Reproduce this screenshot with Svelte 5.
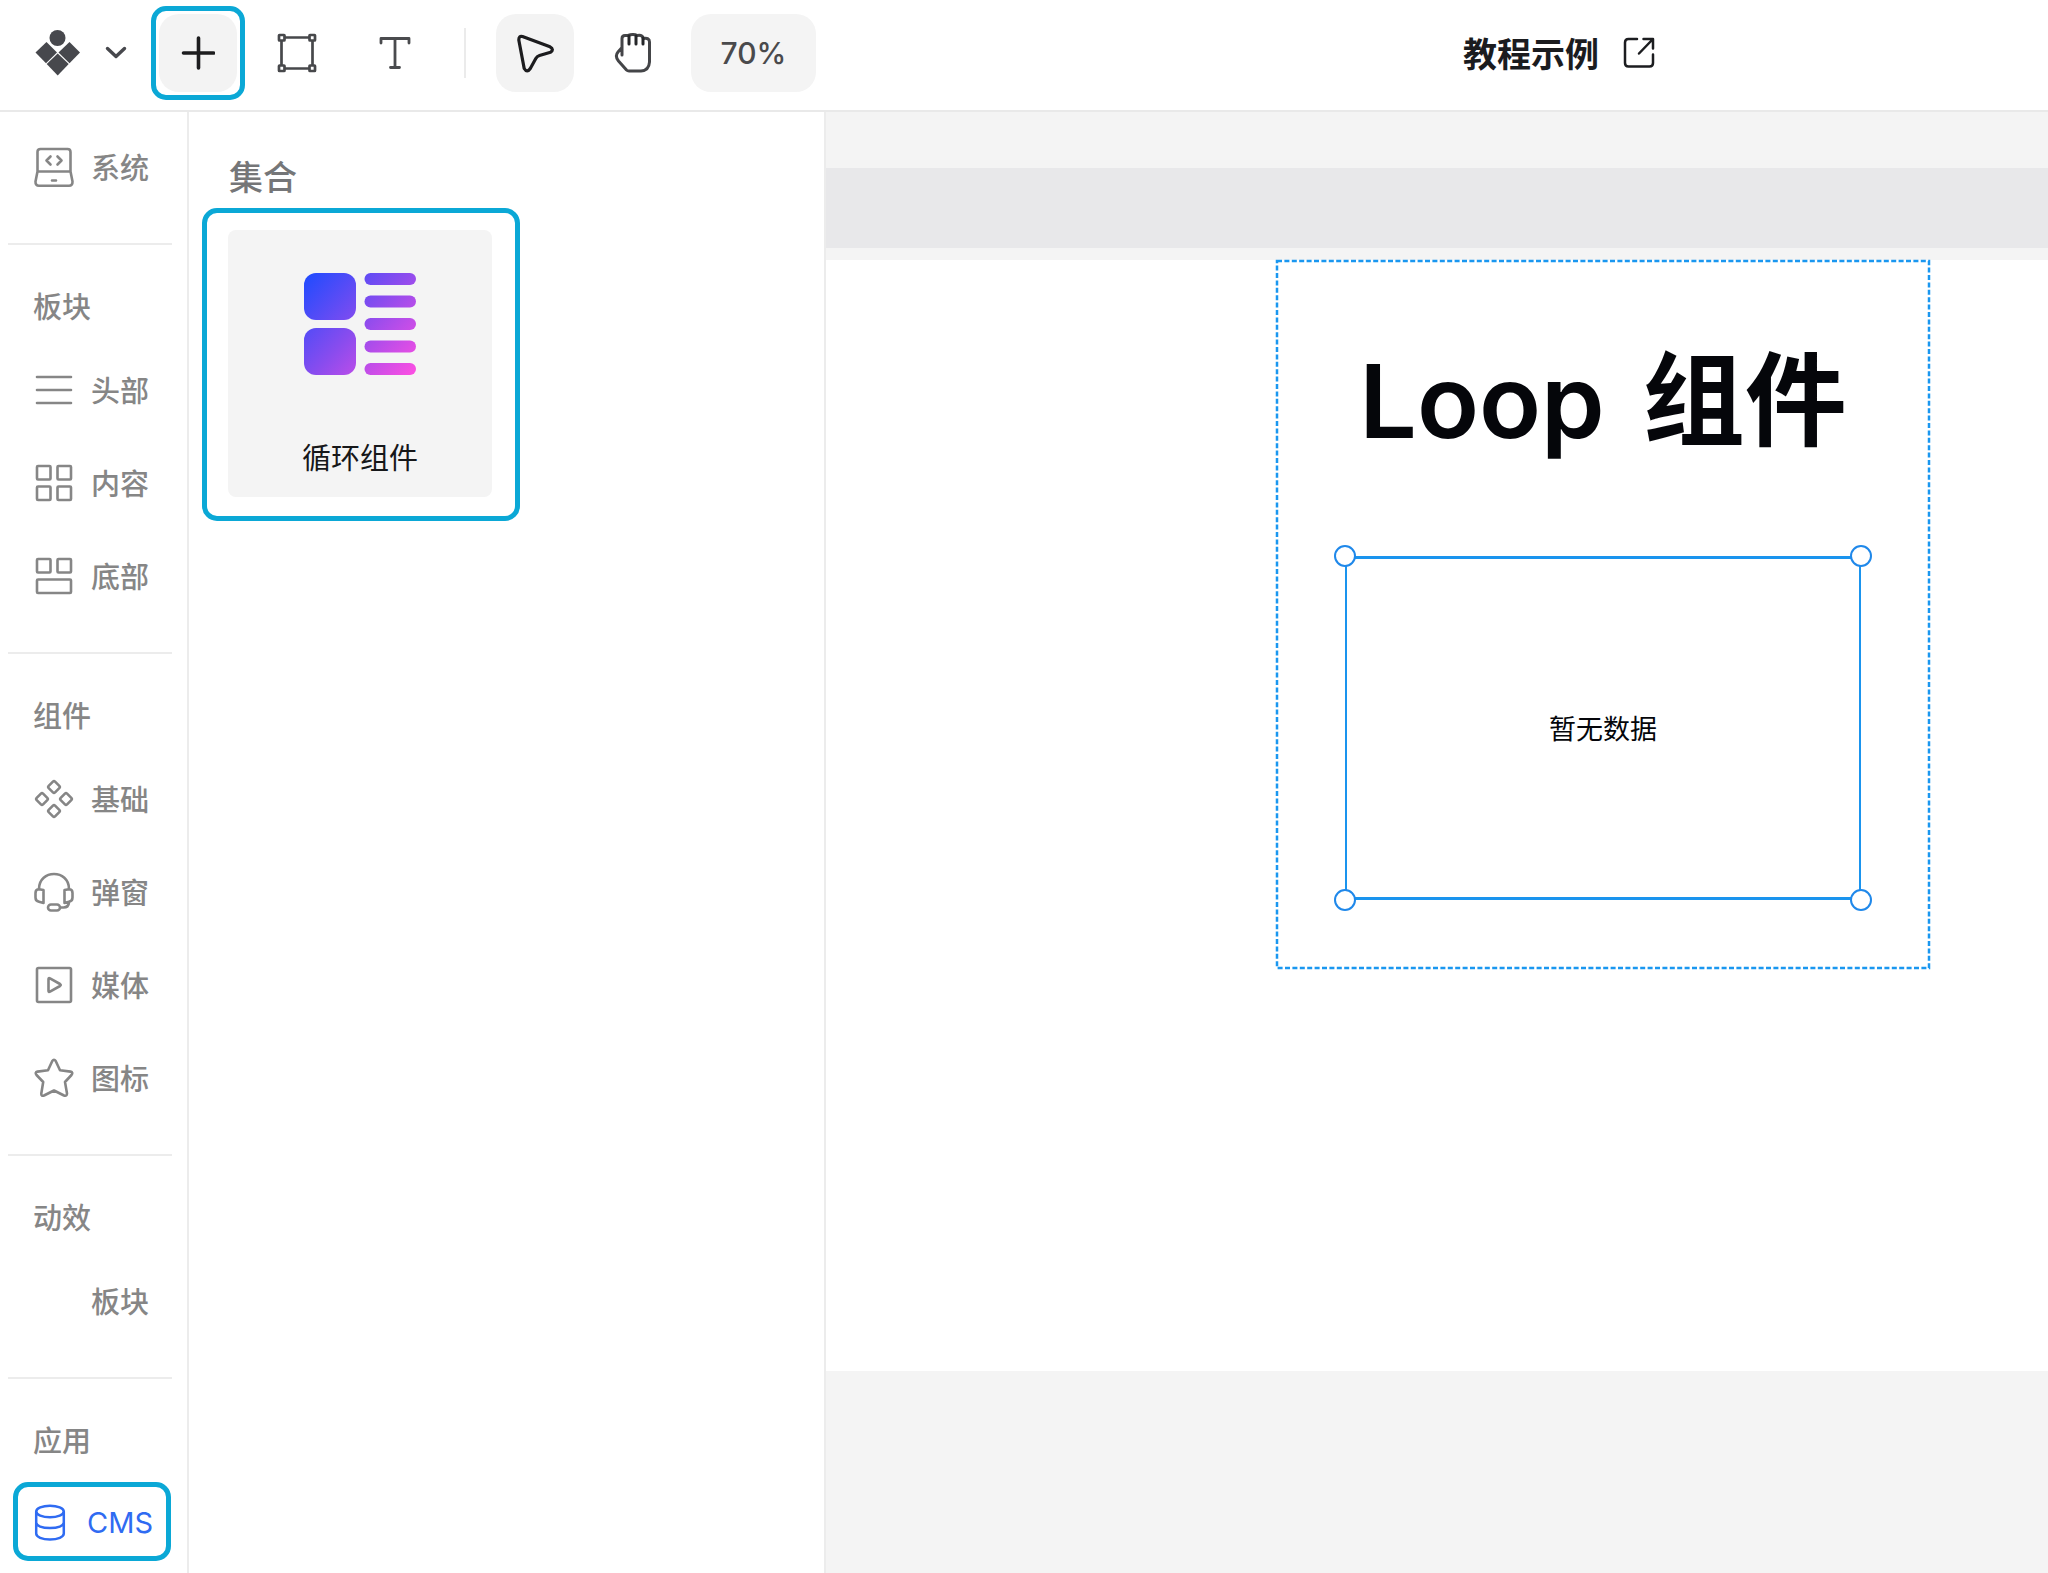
<script>
  const sections = [
    { title: '', items: [{ icon: 'system', label: '系统' }] },
    {
      title: '板块',
      items: [
        { icon: 'lines', label: '头部' },
        { icon: 'grid', label: '内容' },
        { icon: 'footer', label: '底部' }
      ]
    },
    {
      title: '组件',
      items: [
        { icon: 'basic', label: '基础' },
        { icon: 'headset', label: '弹窗' },
        { icon: 'media', label: '媒体' },
        { icon: 'star', label: '图标' }
      ]
    },
    { title: '动效', items: [{ icon: '', label: '板块' }] },
    { title: '应用', items: [{ icon: 'cms', label: 'CMS' }] }
  ];
  const bars = [0, 22.5, 45, 67.5, 90];
</script>

<div class="app">
  <header>
    <button class="logo" aria-label="主菜单">
      <svg class="mark" width="46" height="46" viewBox="0 0 46 46" fill="#47484d">
        <circle cx="22.5" cy="8" r="8" />
        <path d="M11.5 12 22 22.5 11 33.200 0.500 22.500z" />
        <path d="M34.500 12 45 22.500 34.500 33.200 23.500 22.500z" />
        <path d="M22.700 23.500 33.700 34 22.700 45.500 11.700 34z" />
      </svg>
      <svg class="chevron" width="22" height="14" viewBox="0 0 22 14" fill="none" stroke="#47484d" stroke-width="3.400" stroke-linecap="round" stroke-linejoin="round"><path d="M2.500 2.500 11 10.500 19.500 2.500" /></svg>
    </button>
    <div class="ring add">
      <button class="tool filled" aria-label="添加">
        <svg width="34" height="34" viewBox="0 0 34 34" stroke="#1c1c1e" stroke-width="3.600" stroke-linecap="round"><path d="M17.500 2v30M2.500 17h30" /></svg>
      </button>
    </div>
    <button class="tool frame" aria-label="画框">
      <svg width="40" height="40" viewBox="0 0 40 40" fill="none" stroke="#47484b" stroke-width="2.700" stroke-linejoin="round">
        <path d="M8 4.500h24M8 35.500h24M4.500 8v24M35.500 8v24" />
        <rect x="2" y="2" width="5.500" height="5.500" rx=".5" /><rect x="32.500" y="2" width="5.500" height="5.500" rx=".5" />
        <rect x="2" y="32.500" width="5.500" height="5.500" rx=".5" /><rect x="32.500" y="32.500" width="5.500" height="5.500" rx=".5" />
      </svg>
    </button>
    <button class="tool text" aria-label="文本">
      <svg width="32" height="32" viewBox="0 0 32 32" fill="none" stroke="#4a4b4e" stroke-width="2.800" stroke-linecap="round" stroke-linejoin="round"><path d="M2 6V1.500h28V6M16 1.500v29M11.500 30.500h9" /></svg>
    </button>
    <span class="rule"></span>
    <button class="tool filled" aria-label="选择">
      <svg width="38" height="40" viewBox="0 0 38 40" fill="none" stroke="#1c1c1e" stroke-width="3.200" stroke-linejoin="round"><path d="M6.500 3.500 34 13.800Q38.500 16.500 34.500 19.300L23.500 22.500Q21 23.300 19.800 25.500L14.300 35.500Q11 40.300 8.200 35.500L2.800 7Q2.800 2.500 6.500 3.500z" /></svg>
    </button>
    <button class="tool hand" aria-label="抓手">
      <svg width="38" height="40" viewBox="0 0 38 40" fill="none" stroke="#444548" stroke-width="3" stroke-linecap="round" stroke-linejoin="round">
        <path d="M8 22V5.500Q8 2.500 11 2.500H14Q19 .5 23.500 2.500Q28 1.500 29.500 5.500Q35.500 4.500 35.500 9V29Q35 37.500 27 38H15Q13.500 38 12.500 37L4.500 28Q.5 23 4 19L8 14.500" />
        <path d="M15 3v8M22 3v8M29 5v6" stroke="#252629" />
      </svg>
    </button>
    <button class="zoom">70%</button>
    <a class="project" href="#preview">
      <span>教程示例</span>
      <svg width="32" height="32" viewBox="0 0 32 32" fill="none" stroke="#1c1d20" stroke-width="2.500" stroke-linecap="round" stroke-linejoin="round"><path d="M14 2H5.500Q2 2 2 5.500V26Q2 29.500 5.500 29.500H26.500Q30 29.500 30 26V17.500M20.500 2H30V11.500M29.500 2.500 16 16.500" /></svg>
    </a>
  </header>

  <div class="body">
    <nav>
      {#each sections as section}
        <section>
          {#if section.title}<h2>{section.title}</h2>{/if}
          {#each section.items as item}
            <button class="item" class:active={item.icon === 'cms'}>
              {#if item.icon === 'cms'}
                <svg width="32" height="38" viewBox="0 0 32 38" fill="none" stroke="currentColor" stroke-width="2.500">
                  <ellipse cx="16" cy="8.500" rx="13.800" ry="5.800" />
                  <path d="M2.200 8.500v22c0 3.500 6 6 13.800 6s13.800-2.500 13.800-6V8.500M2.200 19.500c0 3.500 6 5.500 13.800 5.500s13.800-2 13.800-5.500" />
                </svg>
              {:else}
                <svg width="40" height="40" viewBox="0 0 40 40" fill="none" stroke="currentColor" stroke-width="2.600" stroke-linecap="round" stroke-linejoin="round">
                  {#if item.icon === 'system'}
                    <path d="M3.500 24.500V5Q3.500 2 6.500 2H33.500Q36.500 2 36.500 5V24.500M3.500 24.500H36.500L38.500 34.500Q38.700 38.700 35 38.700H5Q1.300 38.700 1.500 34.500zM16.500 9.500l-4 4 4 4M23.500 9.500l4 4-4 4M18 33.500h4" />
                  {:else if item.icon === 'lines'}
                    <path d="M3 7h34M3 20h34M3 33h34" />
                  {:else if item.icon === 'grid'}
                    <rect x="3" y="3" width="13.500" height="13.500" rx="1" /><rect x="23.500" y="3" width="13.500" height="13.500" rx="1" />
                    <rect x="3" y="23.500" width="13.500" height="13.500" rx="1" /><rect x="23.500" y="23.500" width="13.500" height="13.500" rx="1" />
                  {:else if item.icon === 'footer'}
                    <rect x="3" y="3" width="13.500" height="13.500" rx="1" /><rect x="23.500" y="3" width="13.500" height="13.500" rx="1" />
                    <rect x="3" y="23.500" width="34" height="13.500" rx="1" />
                  {:else if item.icon === 'basic'}
                    {#each [[20, 8], [8, 20], [32, 20], [20, 32]] as [x, y]}
                      <rect x={x - 4.5} y={y - 4.5} width="9" height="9" rx="1.500" transform="rotate(45 {x} {y})" />
                    {/each}
                  {:else if item.icon === 'headset'}
                    <path d="M5 17C5 -3 35 -3 35 17M9.500 18v13l-4.500-1.200Q1.500 29 1.500 25.500V21Q1.500 17.300 5 17.300zM30.500 18v13l4.500-1.200Q38.500 29 38.500 25.500V21Q38.500 17.300 35 17.300zM35 30.500Q34.500 35.500 29.500 35.500H26.500" />
                    <rect x="14" y="32.500" width="12" height="6" rx="3" />
                  {:else if item.icon === 'media'}
                    <rect x="3" y="3" width="34" height="34" rx="1.500" />
                    <path d="M14.500 14Q14.500 12.500 16 13.300L26 19Q27.500 20 26 21L16 26.700Q14.500 27.500 14.500 26z" />
                  {:else if item.icon === 'star'}
                    <path d="M18.300 3Q20 .5 21.700 3L26 12.200 36.500 13.600Q39.500 14.500 37.500 17L31 24 33 35.500Q33 38.500 30 37.500L20 32.500 10 37.500Q7 38.500 7.300 35.500L9.200 24 2.500 17Q.5 14.500 3.500 13.600L14 12.200z" />
                  {/if}
                </svg>
              {/if}
              <span>{item.label}</span>
            </button>
          {/each}
        </section>
      {/each}
    </nav>

    <aside>
      <h3>集合</h3>
      <div class="ring pick">
        <button class="card">
          <svg width="112" height="102" viewBox="0 0 112 102">
            <defs>
              <linearGradient id="loop" gradientUnits="userSpaceOnUse" x1="0" y1="0" x2="112" y2="102">
                <stop offset="0" stop-color="#1d4bff" /><stop offset=".5" stop-color="#8a4cee" /><stop offset="1" stop-color="#ff4fe2" />
              </linearGradient>
            </defs>
            <g fill="url(#loop)">
              <rect width="52" height="47" rx="12" />
              <rect y="55" width="52" height="47" rx="12" />
              {#each bars as y}<rect x="60.500" {y} width="51.500" height="12" rx="6" fill="url(#loop)" />{/each}
            </g>
          </svg>
          <span>循环组件</span>
        </button>
      </div>
    </aside>

    <main>
      <div class="band"></div>
      <div class="page">
        <article>
          <svg class="outline" aria-hidden="true"><rect width="100%" height="100%" /></svg>
          <h1><span>Loop</span> <span>组件</span></h1>
          <div class="selection">
            <i class="tl"></i><i class="tr"></i><i class="bl"></i><i class="br"></i>
            <p>暂无数据</p>
          </div>
        </article>
      </div>
    </main>
  </div>
</div>

<style>
  :global(body) { margin: 0; background: #fff; }
  .app {
    display: flex;
    flex-direction: column;
    min-height: 100vh;
    font-family: Inter, 'Noto Sans CJK SC', sans-serif;
  }
  .app, .app * { box-sizing: border-box; }
  button { border: 0; padding: 0; margin: 0; background: none; font: inherit; color: inherit; cursor: pointer; }
  svg { display: block; flex: none; }
  h1, h2, h3, p { margin: 0; }

  header {
    display: flex;
    align-items: center;
    height: 112px;
    padding: 0 393px 4px 35px;
    border-bottom: 2px solid #e9e9e9;
  }
  .logo { display: flex; align-items: center; gap: 24px; margin-right: 24px; }
  .ring { border: 5px solid #0ba8d6; border-radius: 15px; }
  .add { padding: 3px; }
  .tool { display: flex; align-items: center; justify-content: center; width: 78px; height: 78px; border-radius: 20px; flex: none; }
  .filled { background: #f3f3f3; }
  .frame { margin-left: 13px; }
  .text { margin-left: 20px; }
  .rule { width: 2px; height: 50px; margin: 0 30px; background: #ebebeb; }
  .hand { margin-left: 20px; }
  .zoom { width: 125px; height: 78px; margin-left: 19px; border-radius: 20px; background: #f4f4f4; font-size: 30px; font-weight: 500; color: #4a4a4c; }
  .project { display: flex; align-items: center; gap: 24px; margin-left: auto; font-size: 34px; font-weight: 700; color: #1b1c1f; text-decoration: none; white-space: nowrap; }
  .project span { padding-bottom: 2px; }

  .body { display: flex; flex: 1; }
  nav { width: 189px; flex: none; padding-right: 15px; border-right: 2px solid #ececec; color: #868686; }
  section { margin-left: 8px; padding: 26px 0 30px; border-top: 2px solid #ececec; }
  section:first-child { border-top: 0; padding-top: 8px; }
  section:last-child { padding-bottom: 12px; }
  h2 { height: 72px; padding-left: 25px; font-size: 29px; line-height: 74px; font-weight: 500; }
  .item { display: flex; align-items: center; gap: 17px; width: 100%; height: 93px; padding-left: 26px; font-size: 29px; font-weight: 500; white-space: nowrap; }
  .item span { padding-bottom: 2px; }
  .active { width: 158px; height: 79px; margin: 5px 0 0 5px; padding-left: 16px; gap: 21px; border: 5px solid #0ba8d6; border-radius: 15px; color: #2f6bf2; font-weight: 400; }
  .active span { padding: 2px 0 0; }

  aside { width: 637px; flex: none; padding: 41px 13px; border-right: 2px solid #ececec; }
  h3 { padding-left: 27px; font-size: 34px; line-height: 50px; font-weight: 500; color: #757678; }
  .pick { width: 318px; margin-top: 5px; padding: 17px 23px 19px 21px; }
  .card { display: flex; flex-direction: column; align-items: center; width: 100%; height: 267px; padding-top: 43px; gap: 64px; border-radius: 8px; background: #f4f4f4; font-size: 29px; line-height: 40px; color: #161719; }

  main { flex: 1; min-width: 0; padding-top: 56px; background: #f4f4f4; }
  .band { height: 80px; background: #e8e8ea; }
  .page { display: grid; grid-template-columns: 450fr 654fr 118fr; margin-top: 12px; padding-bottom: 402px; background: #fff; }
  article { position: relative; grid-column: 2; padding: 65px 69px 69px; color: #05060a; }
  .outline { position: absolute; inset: 1px; width: calc(100% - 2px); height: calc(100% - 2px); overflow: visible; }
  .outline rect { fill: none; stroke: #1a97f0; stroke-width: 2.5; stroke-dasharray: 5 2.4; }
  h1 { display: flex; justify-content: center; gap: 38px; font-size: 102px; line-height: 152px; font-weight: 600; white-space: nowrap; }
  .selection { position: relative; display: flex; align-items: center; justify-content: center; height: 344px; margin-top: 79px; border: solid #1a94ee; border-width: 3px 2px; font-size: 27px; }
  .selection p { padding-bottom: 2px; }
  .selection i { position: absolute; width: 22px; height: 22px; border: 2px solid #1f88ea; border-radius: 50%; background: #fff; }
  .tl { top: -14px; left: -13px; }
  .tr { top: -14px; right: -13px; }
  .bl { bottom: -14px; left: -13px; }
  .br { bottom: -14px; right: -13px; }
</style>
